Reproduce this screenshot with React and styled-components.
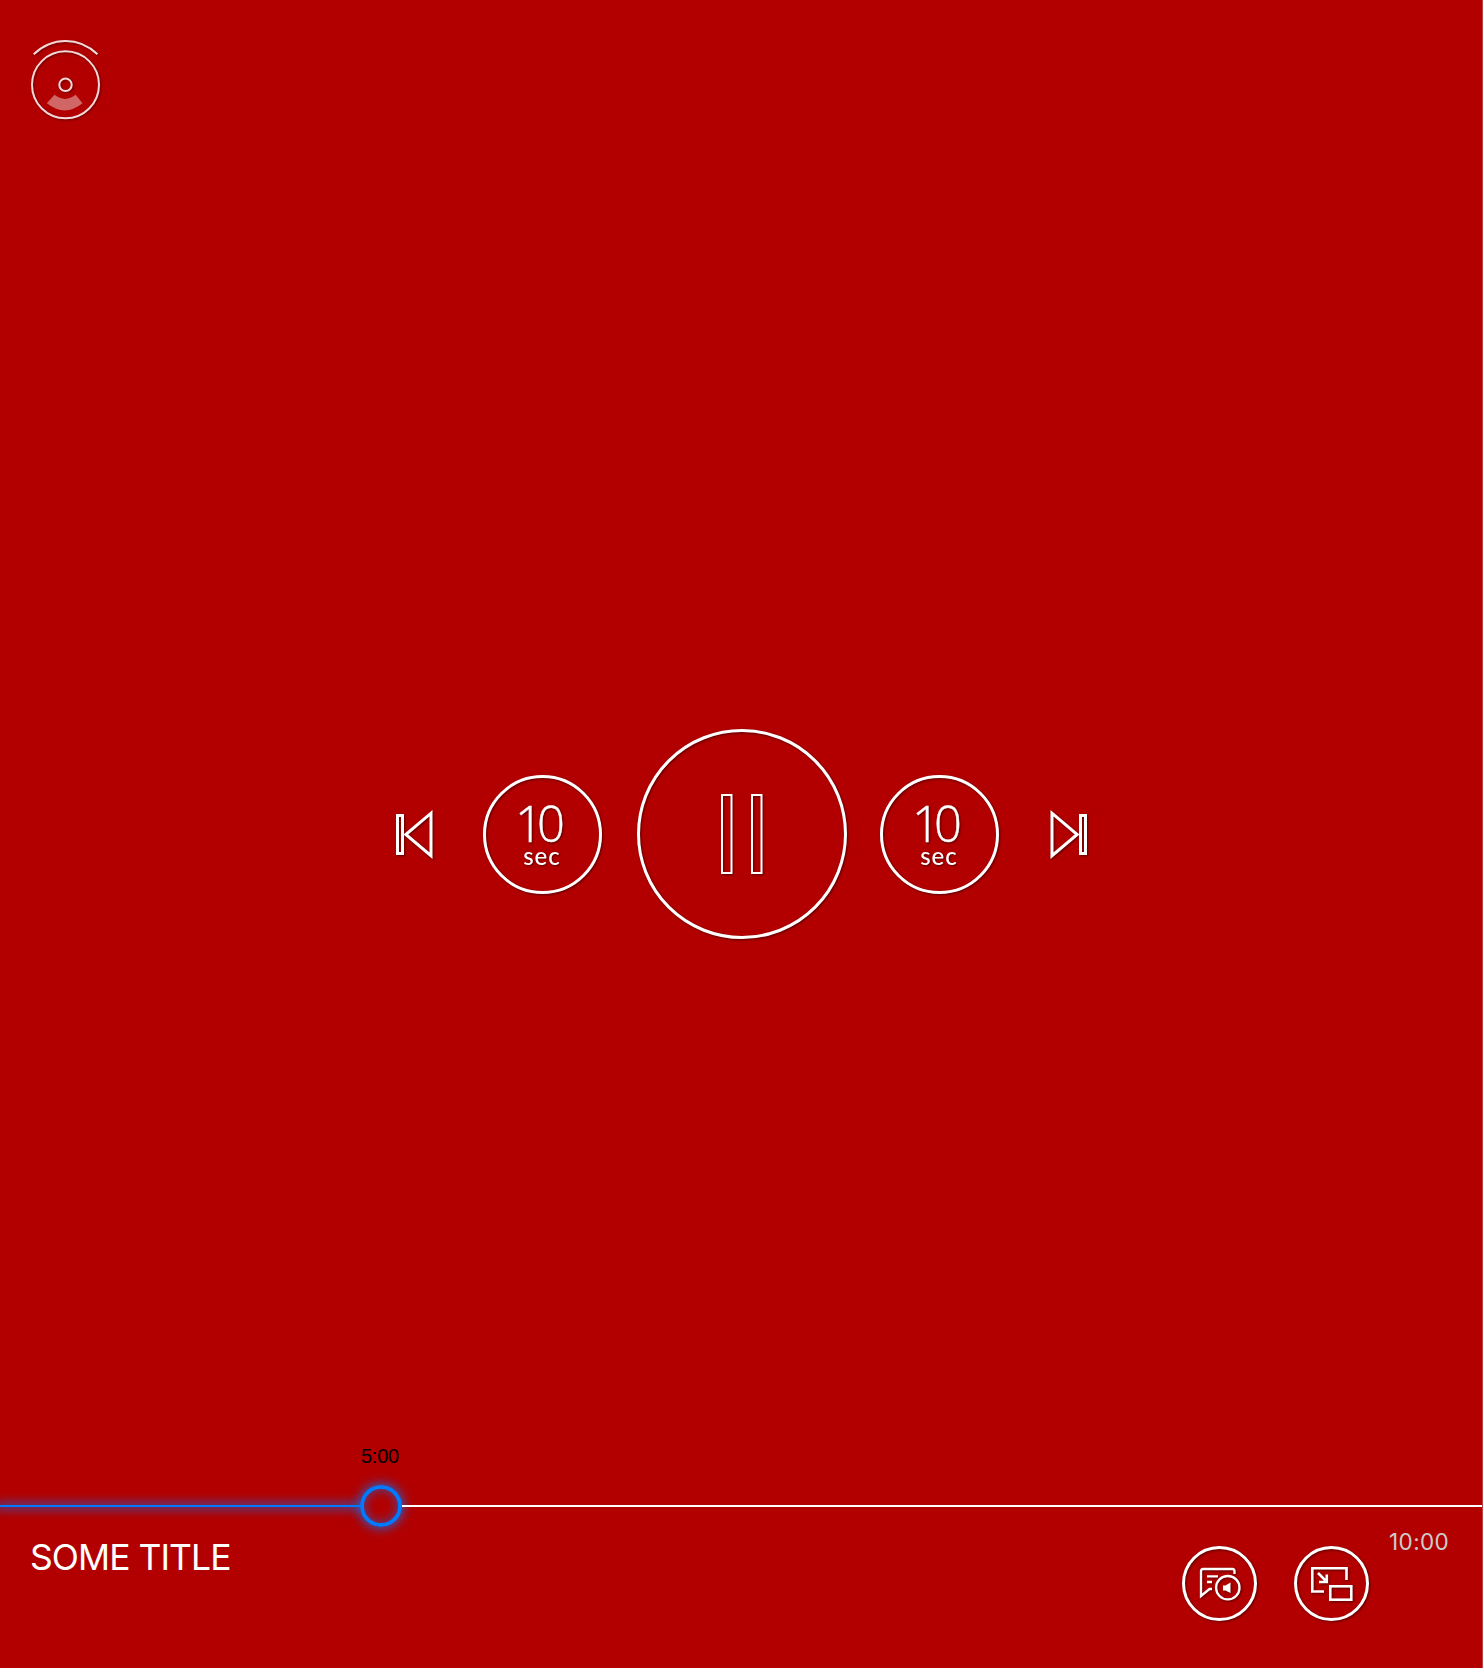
import React from "react";
import styled, { createGlobalStyle, css } from "styled-components";

const GlobalStyle = createGlobalStyle`
  * { box-sizing: border-box; }
  body { margin: 0; background: #b20000; }
`;

const shadow = css`
  filter: drop-shadow(1px 1px 1px rgba(0, 0, 0, 0.5));
`;

const Player = styled.main`
  display: grid;
  grid-template-rows: 1fr 212px 1fr;
  width: 100%;
  height: 1668px;
  background: #b20000;
  border-right: 1px solid #c64040;
  font-family: Inter, "Liberation Sans", sans-serif;
  overflow: hidden;
`;

const Header = styled.header`
  padding: 36px 0 0 26px;
`;

const Icon = styled.svg`
  display: block;
  fill: none;
  stroke: #fff;
  overflow: visible;
  ${(p) => !p.$flat && shadow}
`;

const Outline = styled.g`
  opacity: 0.85;
  ${shadow}
`;

const Controls = styled.nav`
  display: grid;
  grid-template-columns: 87px 154px 243px 170px 37px;
  justify-content: center;
  align-items: center;
`;

const IconButton = styled.button`
  display: block;
  justify-self: start;
  padding: 0;
  border: 0;
  background: none;
  color: #fff;
`;

const RoundButton = styled(IconButton)`
  display: flex;
  flex-direction: column;
  align-items: center;
  justify-content: center;
  width: ${(p) => p.$size}px;
  height: ${(p) => p.$size}px;
  border: 3px solid #fff;
  border-radius: 50%;
  ${shadow}
`;

const SkipAmount = styled.span`
  font: 300 49px/38px "Open Sans", sans-serif;
  letter-spacing: -6px;
  margin: 4px 0 0 -10px;
  -webkit-text-stroke: 0.4px #fff;
`;

const SkipUnit = styled.span`
  font: 500 24px/24px Lato, sans-serif;
  letter-spacing: 1px;
  margin-top: 2px;
`;

const Footer = styled.footer`
  display: flex;
  flex-direction: column;
  justify-content: flex-end;
`;

const Elapsed = styled.time`
  width: 80px;
  margin-left: 340px;
  margin-bottom: 17px;
  font: 400 20px/24px "Liberation Sans", sans-serif;
  letter-spacing: -0.2px;
  text-align: center;
  color: #000;
`;

const Timeline = styled.div`
  display: flex;
  align-items: center;
  height: 42px;
`;

const Played = styled.div`
  width: 360px;
  height: 2px;
  background: #007aff;
  box-shadow: 0 0 9px 4px rgba(0, 122, 255, 0.42);
  clip-path: inset(-20px 0 -20px 0);
`;

const Thumb = styled.div`
  width: 42px;
  height: 42px;
  border: 4px solid #007aff;
  border-radius: 50%;
  box-shadow: 0 0 11px 1px rgba(0, 122, 255, 0.85), inset 0 0 11px rgba(0, 122, 255, 0.6);
`;

const Remaining = styled.div`
  flex: 1;
  height: 2px;
  background: #fff;
`;

const Info = styled.div`
  display: flex;
  align-items: flex-start;
  height: 141px;
  padding: 0 34px 0 31px;
`;

const Title = styled.h1`
  flex: 1;
  margin: 9px 0 0 -1px;
  font-size: 35.5px;
  line-height: 44px;
  font-weight: 400;
  letter-spacing: -0.95px;
  color: #fff;
`;

const Actions = styled.div`
  display: flex;
  gap: 37px;
  margin-top: 19px;
  margin-right: 20px;
`;

const Duration = styled.time`
  width: 59px;
  margin-top: 1px;
  font-size: 22.5px;
  line-height: 28px;
  font-weight: 400;
  letter-spacing: 0.4px;
  color: #ccc;
`;

function Logo() {
  return (
    <Icon $flat width="80" height="88" viewBox="26 36 80 88" strokeWidth="2">
      <Outline>
        <path d="M33.7 54.3C52 36.6 79 36.6 97.5 54.3" />
        <circle cx="65.5" cy="84.8" r="33.5" />
        <circle cx="65.5" cy="84.8" r="6.2" />
      </Outline>
      <path
        d="M54.5 94.8Q65 103 75.7 94.8L82.5 103.3Q65 117.5 46.8 103.3Z"
        fill="#fff"
        stroke="none"
        opacity=".4"
      />
    </Icon>
  );
}

function TrackIcon({ next }) {
  return (
    <Icon width="37" height="49" viewBox="0 0 37 49" strokeWidth="3">
      <g transform={next ? "translate(37 0) scale(-1 1)" : undefined}>
        <rect x="1.5" y="5.5" width="5" height="38" />
        <path d="M35 3.2V45.7L9.8 24.5Z" />
      </g>
    </Icon>
  );
}

function Skip() {
  return (
    <RoundButton $size={119}>
      <SkipAmount>10</SkipAmount>
      <SkipUnit>sec</SkipUnit>
    </RoundButton>
  );
}

export default function App() {
  return (
    <>
      <GlobalStyle />
      <Player>
        <Header>
          <Logo />
        </Header>
        <Controls>
          <IconButton aria-label="Previous">
            <TrackIcon />
          </IconButton>
          <Skip />
          <RoundButton $size={210} aria-label="Pause">
            <Icon $flat width="42" height="82" viewBox="0 0 42 82" strokeWidth="2">
              <rect x="1" y="2" width="9.5" height="78" />
              <rect x="31" y="2" width="9.5" height="78" />
            </Icon>
          </RoundButton>
          <Skip />
          <IconButton aria-label="Next">
            <TrackIcon next />
          </IconButton>
        </Controls>
        <Footer>
          <Elapsed>5:00</Elapsed>
          <Timeline>
            <Played />
            <Thumb />
            <Remaining />
          </Timeline>
          <Info>
            <Title>SOME TITLE</Title>
            <Actions>
              <RoundButton $size={75} aria-label="Audio and subtitles">
                <Icon $flat width="42" height="34" viewBox="0 0 42 34" strokeWidth="2.3">
                  <path d="M35.5 7V4Q35.5 2 33.5 2H4Q2 2 2 4V29L10.5 22H13" />
                  <path d="M8 9.3H19M8 15H13" />
                  <circle cx="28.8" cy="20.7" r="11.7" />
                  <path d="M24 18.5H26.5L31.5 15.5V26L26.5 23.5H24Z" fill="#fff" stroke="none" />
                </Icon>
              </RoundButton>
              <RoundButton $size={75} aria-label="Picture in picture">
                <Icon $flat width="42" height="34" viewBox="0 0 42 34" strokeWidth="2.6">
                  <path d="M35.5 13V1.3H1.3V24.5H13" />
                  <path d="M7 6L15.5 14.5M15.8 7.5V15H8" />
                  <rect x="19.3" y="19.3" width="21" height="13.4" />
                </Icon>
              </RoundButton>
            </Actions>
            <Duration>10:00</Duration>
          </Info>
        </Footer>
      </Player>
    </>
  );
}
